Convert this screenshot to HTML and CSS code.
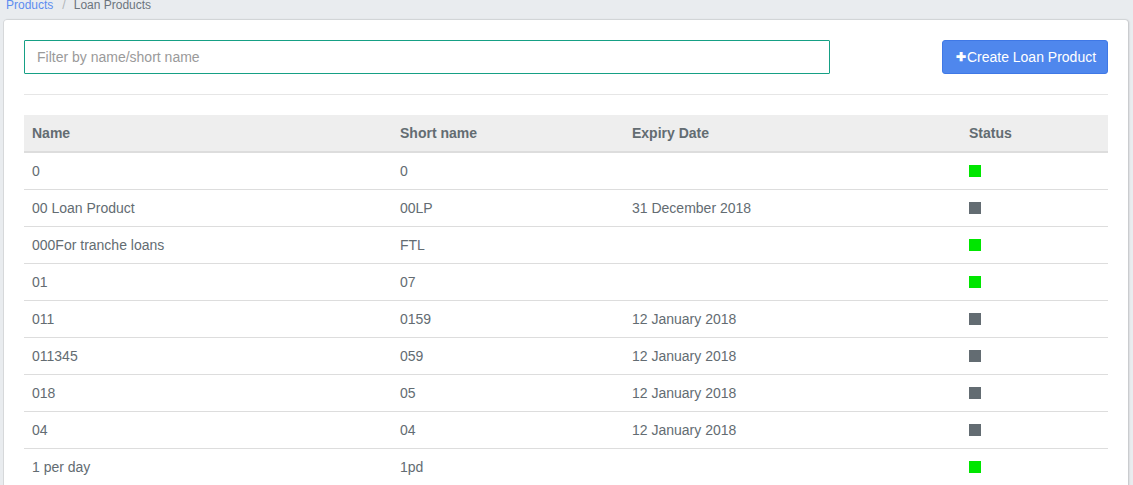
FILE: index.html
```html
<!DOCTYPE html>
<html>
<head>
<meta charset="utf-8">
<link rel="stylesheet" href="styles.css">
</head>
<body>
<div class="page">
  <nav class="breadcrumb">
    <a class="crumb-link" href="#">Products</a><span class="sep">/</span><span class="crumb-current">Loan Products</span>
  </nav>
  <div class="card">
    <div class="toolbar">
      <input class="filter" type="text" placeholder="Filter by name/short name">
      <button class="btn-create"><span class="plus">&#10010;</span>Create Loan Product</button>
    </div>
    <hr class="divider">
    <table class="products">
      <thead>
        <tr><th class="c-name">Name</th><th class="c-short">Short name</th><th class="c-exp">Expiry Date</th><th class="c-status">Status</th></tr>
      </thead>
      <tbody>
        <tr><td>0</td><td>0</td><td></td><td><span class="st st-active"></span></td></tr>
        <tr><td>00 Loan Product</td><td>00LP</td><td>31 December 2018</td><td><span class="st st-closed"></span></td></tr>
        <tr><td>000For tranche loans</td><td>FTL</td><td></td><td><span class="st st-active"></span></td></tr>
        <tr><td>01</td><td>07</td><td></td><td><span class="st st-active"></span></td></tr>
        <tr><td>011</td><td>0159</td><td>12 January 2018</td><td><span class="st st-closed"></span></td></tr>
        <tr><td>011345</td><td>059</td><td>12 January 2018</td><td><span class="st st-closed"></span></td></tr>
        <tr><td>018</td><td>05</td><td>12 January 2018</td><td><span class="st st-closed"></span></td></tr>
        <tr><td>04</td><td>04</td><td>12 January 2018</td><td><span class="st st-closed"></span></td></tr>
        <tr><td>1 per day</td><td>1pd</td><td></td><td><span class="st st-active"></span></td></tr>
      </tbody>
    </table>
  </div>
</div>
</body>
</html>
```
FILE: styles.css
```css
* { box-sizing: border-box; }
html, body { margin: 0; padding: 0; }
body {
  background: #e9ecef;
  font-family: "Liberation Sans", Arial, sans-serif;
  font-size: 14px;
  color: #636c72;
  overflow: hidden;
}
.page { padding: 0 5px 0 4px; }
.breadcrumb {
  margin-top: -4px;
  margin-bottom: 6px;
  padding-left: 2px;
  font-size: 12px;
  line-height: 18px;
}
.crumb-link { color: #5d8cf0; text-decoration: none; }
.sep { color: #b0b4b8; padding: 0 8px 0 9px; }
.crumb-current { color: #6c757d; }
.card {
  background: #fff;
  border-radius: 3px;
  box-shadow: -1px 0 0 #d6d8da, 1px 0 2px rgba(0,0,0,0.18), 0 -1px 1px rgba(0,0,0,0.06);
  padding: 20px 20px 40px 20px;
  min-height: 500px;
}
.toolbar {
  display: flex;
  justify-content: space-between;
  align-items: center;
}
.filter {
  width: 806px;
  height: 34px;
  border: 1px solid #16a085;
  border-radius: 1px;
  padding: 0 12px;
  font-family: inherit;
  font-size: 14px;
  color: #555;
  outline: none;
}
.filter::placeholder { color: #9a9a9a; }
.btn-create {
  width: 166px;
  height: 34px;
  background: #4f87ed;
  border: 1px solid #3f78e6;
  border-radius: 3px;
  color: #fff;
  font-family: inherit;
  font-size: 14px;
  padding: 0 0 0 2px;
  display: flex;
  align-items: center;
  justify-content: center;
}
.plus { font-size: 12px; font-weight: bold; margin-right: 1px; }
.divider {
  border: 0;
  border-top: 1px solid #e6e6e6;
  margin: 20px 0 20px 0;
}
.products {
  width: 100%;
  border-collapse: collapse;
  table-layout: fixed;
}
.products th, .products td {
  text-align: left;
  padding: 8px;
  line-height: 20px;
  height: 36px;
}
.products th {
  background: #eeeeee;
  font-weight: bold;
  color: #636c72;
  border-bottom: 2px solid #dddddd;
}
.products td { border-bottom: 1px solid #dddddd; }
.c-name { width: 368px; }
.c-short { width: 232px; }
.c-exp { width: 337px; }
.st {
  display: inline-block;
  width: 12px;
  height: 12px;
  vertical-align: -1px;
}
.st-active { background: #00e600; }
.st-closed { background: #636c72; }
```
